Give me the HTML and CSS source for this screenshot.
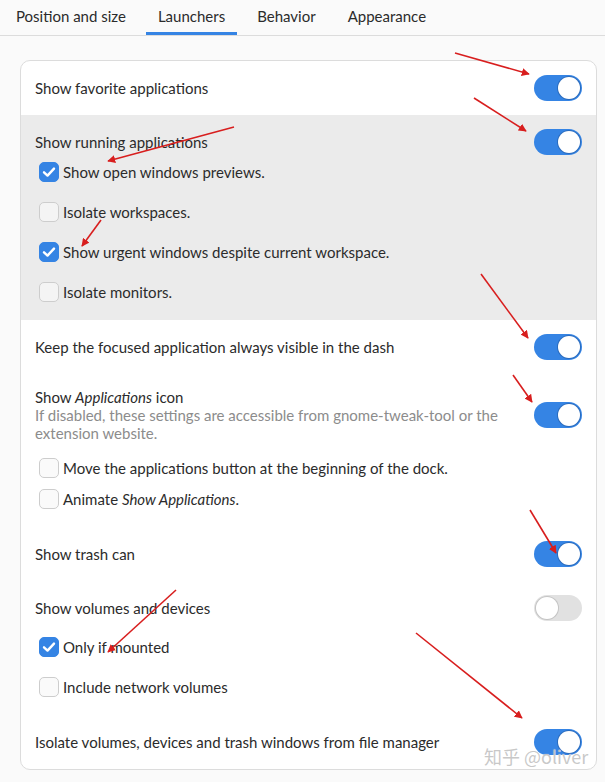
FILE: index.html
```html
<!DOCTYPE html>
<html lang="en">
<head>
<meta charset="utf-8">
<title>Dash to Dock – Launchers</title>
<link rel="stylesheet" href="styles.css">
</head>
<body>
<nav class="tabs">
  <div class="tab">Position and size</div>
  <div class="tab tab-active">Launchers</div>
  <div class="tab">Behavior</div>
  <div class="tab">Appearance</div>
</nav>

<main class="card">
  <div class="row">
    <span class="label">Show favorite applications</span>
    <span class="switch on"><span class="knob"></span></span>
  </div>

  <section class="shaded">
    <div class="head">
      <span class="label">Show running applications</span>
      <span class="switch on"><span class="knob"></span></span>
    </div>
    <ul class="checks">
      <li class="check"><span class="box checked"></span>Show open windows previews.</li>
      <li class="check"><span class="box"></span>Isolate workspaces.</li>
      <li class="check"><span class="box checked"></span>Show urgent windows despite current workspace.</li>
      <li class="check"><span class="box"></span>Isolate monitors.</li>
    </ul>
  </section>

  <div class="row">
    <span class="label">Keep the focused application always visible in the dash</span>
    <span class="switch on"><span class="knob"></span></span>
  </div>

  <section class="apps">
    <div class="apps-head">
      <div class="apps-text">
        <div class="label">Show <em>Applications</em> icon</div>
        <div class="sub">If disabled, these settings are accessible from gnome-tweak-tool or the extension website.</div>
      </div>
      <span class="switch on"><span class="knob"></span></span>
    </div>
    <ul class="checks tight">
      <li class="check"><span class="box"></span>Move the applications button at the beginning of the dock.</li>
      <li class="check"><span class="box"></span>Animate&nbsp;<em>Show Applications</em>.</li>
    </ul>
  </section>

  <div class="row">
    <span class="label">Show trash can</span>
    <span class="switch on"><span class="knob"></span></span>
  </div>

  <section class="group">
    <div class="row">
      <span class="label">Show volumes and devices</span>
      <span class="switch"><span class="knob"></span></span>
    </div>
    <ul class="checks">
      <li class="check"><span class="box checked"></span>Only if mounted</li>
      <li class="check"><span class="box"></span>Include network volumes</li>
    </ul>
  </section>

  <div class="row">
    <span class="label">Isolate volumes, devices and trash windows from file manager</span>
    <span class="switch on"><span class="knob"></span></span>
  </div>
</main>

<svg class="annot" width="605" height="782" viewBox="0 0 605 782" aria-hidden="true">
  <defs>
    <marker id="ah" viewBox="0 0 10 10" refX="9" refY="5" markerWidth="5" markerHeight="5" orient="auto-start-reverse">
      <path d="M0 0 L10 5 L0 10 z" fill="#d81e1e"/>
    </marker>
  </defs>
  <g stroke="#d81e1e" stroke-width="1.6" fill="none" marker-end="url(#ah)">
    <line x1="455" y1="53" x2="529" y2="74"/>
    <line x1="474" y1="98" x2="526" y2="131"/>
    <line x1="234" y1="127" x2="108" y2="161"/>
    <line x1="101" y1="220" x2="82" y2="246"/>
    <line x1="481" y1="274" x2="528" y2="338"/>
    <line x1="513" y1="375" x2="532" y2="402"/>
    <line x1="530" y1="510" x2="556" y2="553"/>
    <line x1="176" y1="590" x2="108" y2="652"/>
    <line x1="416" y1="633" x2="522" y2="718"/>
  </g>
</svg>
<div class="watermark">知乎 @oliver</div>
</body>
</html>
```
FILE: styles.css
```css
* { box-sizing: border-box; }

html, body {
  margin: 0;
  padding: 0;
}

body {
  width: 605px;
  height: 782px;
  overflow: hidden;
  position: relative;
  background: #fafafa;
  color: #2b2b2b;
  font-family: Lato, "Liberation Sans", "Noto Sans CJK SC", sans-serif;
  font-size: 15px;
}

/* ---- tabs ---- */
.tabs {
  display: flex;
  height: 36px;
  border-bottom: 1px solid #dcdcdc;
  background: #fafafa;
  padding-left: 4px;
  gap: 8px;
}

.tab {
  padding: 0 12px;
  line-height: 33px;
  border-bottom: 3px solid transparent;
  white-space: nowrap;
}

.tab-active { border-bottom-color: #3584e4; }

/* ---- card ---- */
.card {
  margin: 24px 8px 0 20px;
  background: #fff;
  border: 1px solid #dcdcdc;
  border-radius: 10px;
  overflow: hidden;
}

.row {
  display: flex;
  align-items: center;
  justify-content: space-between;
  min-height: 54px;
  padding: 0 14px;
}

.label { line-height: 18px; }

.switch {
  flex: none;
  position: relative;
  width: 48px;
  height: 26px;
  border-radius: 13px;
  background: #e1e1e1;
}

.switch .knob {
  position: absolute;
  top: 2px;
  left: 2px;
  width: 22px;
  height: 22px;
  border-radius: 50%;
  background: #fff;
  box-shadow: 0 0 0 1px #c4c4c4;
}

.switch.on { background: #3584e4; }

.switch.on .knob {
  left: 24px;
  box-shadow: 0 0 0 1px #2a6bbd;
}

/* ---- checkbox lists ---- */
.checks {
  list-style: none;
  margin: 0;
  padding: 0;
  display: flex;
  flex-direction: column;
  gap: 16px;
}

.check {
  display: flex;
  align-items: center;
  height: 24px;
  padding-left: 18px;
  white-space: nowrap;
}

.box {
  flex: none;
  width: 20px;
  height: 20px;
  margin-right: 4px;
  border-radius: 5px;
  background-color: #fafafa;
  border: 1px solid #cdcdcd;
}

.shaded .box { background-color: #f4f4f4; }

.box.checked,
.shaded .box.checked {
  background-color: #3584e4;
  background-image: url("data:image/svg+xml;utf8,<svg xmlns='http://www.w3.org/2000/svg' viewBox='0 0 20 20'><path d='M5 10.3 L8.5 13.6 L15 6.6' fill='none' stroke='white' stroke-width='2.4' stroke-linecap='round' stroke-linejoin='round'/></svg>");
  background-position: center;
  background-size: 20px 20px;
  background-repeat: no-repeat;
  border-color: #3584e4;
}

/* ---- shaded running-apps section ---- */
.shaded {
  background: #ebebeb;
  padding: 14px 0 16px;
}

.head {
  display: flex;
  align-items: center;
  justify-content: space-between;
  height: 26px;
  padding: 0 14px;
  margin-bottom: 5px;
}

/* ---- show applications section ---- */
.apps { padding: 14px 0 16px; }

.apps-head {
  display: flex;
  align-items: center;
  justify-content: space-between;
  padding: 0 14px;
  gap: 24px;
}

.apps-text { flex: 1; }

.sub {
  color: #8c8c8c;
  line-height: 18px;
}

.checks.tight {
  gap: 7px;
  margin-top: 14px;
}

/* ---- volumes group ---- */
.group { padding-bottom: 16px; }

/* ---- annotations ---- */
.annot {
  position: absolute;
  left: 0;
  top: 0;
  pointer-events: none;
}

.watermark {
  position: absolute;
  left: 484px;
  top: 744px;
  font-family: "Noto Sans CJK SC", "Liberation Sans", sans-serif;
  font-size: 18px;
  line-height: 24px;
  color: rgba(190, 190, 190, 0.85);
  text-shadow: 0 0 1px rgba(255, 255, 255, 0.9);
  white-space: nowrap;
}
```
